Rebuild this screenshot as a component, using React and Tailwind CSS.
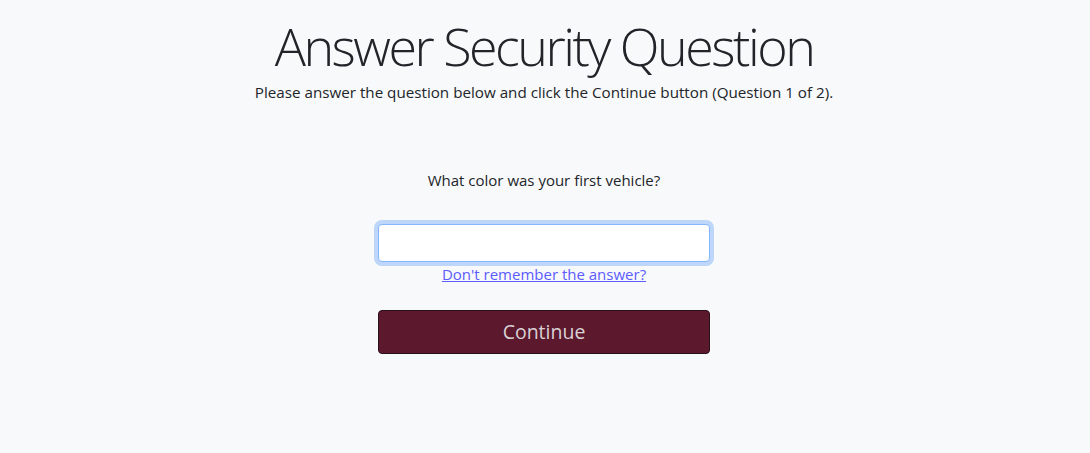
export default function App() {
  return (
    <div className="min-h-[453px] w-full bg-[#f8f9fa] text-[#212529] font-['Open_Sans','Noto_Sans',sans-serif]">
      <div className="flex flex-col items-center pt-[12px] pr-[2px]">
        <h1 className="text-[52px] leading-[67px] font-light tracking-[-2.5px]">Answer Security Question</h1>
        <p className="text-[15.2px] leading-[24px] mt-[1px]">
          Please answer the question below and click the Continue button (Question 1 of 2).
        </p>
        <p className="text-[15px] leading-[24px] mt-[64px]">What color was your first vehicle?</p>
        <form className="flex flex-col items-center w-[332px] mt-[32px]" onSubmit={(e) => e.preventDefault()}>
          <input
            type="text"
            className="w-full h-[38px] bg-white rounded-[4px] border border-[#86b7fe] shadow-[0_0_0_4px_rgba(13,110,253,0.25)] outline-none px-3 text-base"
          />
          <a href="#" className="text-[15px] leading-[24px] text-[#5c5cff] underline">
            Don't remember the answer?
          </a>
          <button
            type="submit"
            className="w-full h-[44px] mt-[24px] bg-[#5c182d] border border-[#2a1018] rounded-[4px] text-[19.5px] text-[#d9d2d6]"
          >
            Continue
          </button>
        </form>
      </div>
    </div>
  )
}
